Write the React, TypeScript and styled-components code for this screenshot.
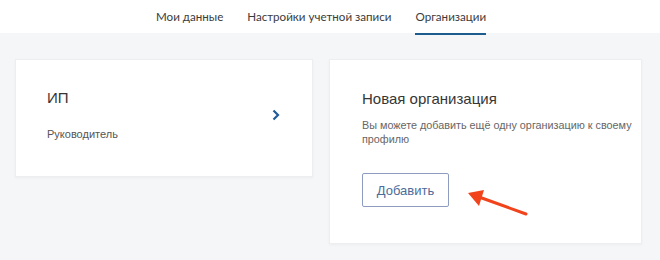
import React from "react";
import styled, { createGlobalStyle } from "styled-components";

const Global = createGlobalStyle`
  html, body { margin: 0; padding: 0; }
  body {
    width: 660px;
    height: 260px;
    overflow: hidden;
    background: #f5f6f7;
    font-family: "Liberation Sans", Arial, sans-serif;
  }
`;

const Page = styled.div`
  width: 660px;
  height: 260px;
  display: flex;
  flex-direction: column;
  background: #f5f6f7;
  font-family: "Liberation Sans", Arial, sans-serif;
`;

const Header = styled.nav`
  height: 33px;
  background: #ffffff;
  display: flex;
  align-items: center;
  gap: 24px;
  padding-left: 156px;
  box-sizing: border-box;
`;

const Tab = styled.span<{ $active?: boolean }>`
  position: relative;
  font-family: Lato, "Noto Sans", sans-serif;
  font-size: 11.6px;
  line-height: 33px;
  color: #3b3b3b;
  white-space: nowrap;
  &::after {
    content: "";
    display: ${(p) => (p.$active ? "block" : "none")};
    position: absolute;
    left: 0;
    right: 0;
    bottom: -2px;
    height: 2px;
    background: #1f5c8e;
  }
`;

const Cards = styled.div`
  display: flex;
  align-items: flex-start;
  gap: 16px;
  padding: 26px 0 0 15px;
`;

const Card = styled.section<{ $width: number }>`
  width: ${(p) => p.$width}px;
  box-sizing: border-box;
  background: #ffffff;
  border: 1px solid #eceeef;
  box-shadow: 0 1px 3px rgba(0, 0, 0, 0.04);
  font-family: "Liberation Sans", Arial, sans-serif;
`;

const OrgCard = styled(Card)`
  height: 118px;
  display: flex;
  align-items: center;
  padding: 0 32px 0 31px;
`;

const OrgInfo = styled.div`
  flex: 1;
  display: flex;
  flex-direction: column;
  margin-top: -6px;
`;

const Title = styled.div`
  font-family: "Liberation Sans", Arial, sans-serif;
  font-size: 15px;
  line-height: 18px;
  color: #363636;
`;

const Role = styled.div`
  margin-top: 20px;
  font-family: "Liberation Sans", Arial, sans-serif;
  font-size: 11px;
  line-height: 14px;
  color: #555555;
`;

const Chevron = styled.svg`
  width: 8px;
  height: 12px;
  margin-top: -7px;
  flex-shrink: 0;
`;

const NewCard = styled(Card)`
  height: 185px;
  padding: 30px 10px 0 32px;
  display: flex;
  flex-direction: column;
  align-items: flex-start;
  position: relative;
`;

const Desc = styled.p`
  margin: 10px 0 0;
  font-family: "Liberation Sans", Arial, sans-serif;
  font-size: 10.8px;
  line-height: 14px;
  color: #666666;
  white-space: nowrap;
`;

const AddButton = styled.button`
  margin-top: 27px;
  width: 87px;
  height: 34px;
  background: #ffffff;
  border: 1px solid #8d9cbf;
  border-radius: 2px;
  font-family: "Liberation Sans", Arial, sans-serif;
  font-size: 13px;
  color: #4d6c9c;
  cursor: pointer;
`;

const Pointer = styled.svg`
  position: absolute;
  left: 135px;
  top: 125px;
  width: 64px;
  height: 32px;
`;

export default function App() {
  return (
    <>
      <Global />
      <Page>
        <Header>
          <Tab>Мои данные</Tab>
          <Tab>Настройки учетной записи</Tab>
          <Tab $active>Организации</Tab>
        </Header>
        <Cards>
          <OrgCard $width={298}>
            <OrgInfo>
              <Title>ИП</Title>
              <Role>Руководитель</Role>
            </OrgInfo>
            <Chevron viewBox="0 0 8 12">
              <path d="M1.5 1.5 L6 6 L1.5 10.5" fill="none" stroke="#1f5c99" strokeWidth="2.2" />
            </Chevron>
          </OrgCard>
          <NewCard $width={313}>
            <Title>Новая организация</Title>
            <Desc>
              Вы можете добавить ещё одну организацию к своему
              <br />
              профилю
            </Desc>
            <AddButton>Добавить</AddButton>
            <Pointer viewBox="0 0 64 32">
              <line x1="61" y1="29" x2="14" y2="12" stroke="#f1441d" strokeWidth="3" strokeLinecap="round" />
              <polygon points="3,8 19,5 14,21" fill="#f1441d" />
            </Pointer>
          </NewCard>
        </Cards>
      </Page>
    </>
  );
}
